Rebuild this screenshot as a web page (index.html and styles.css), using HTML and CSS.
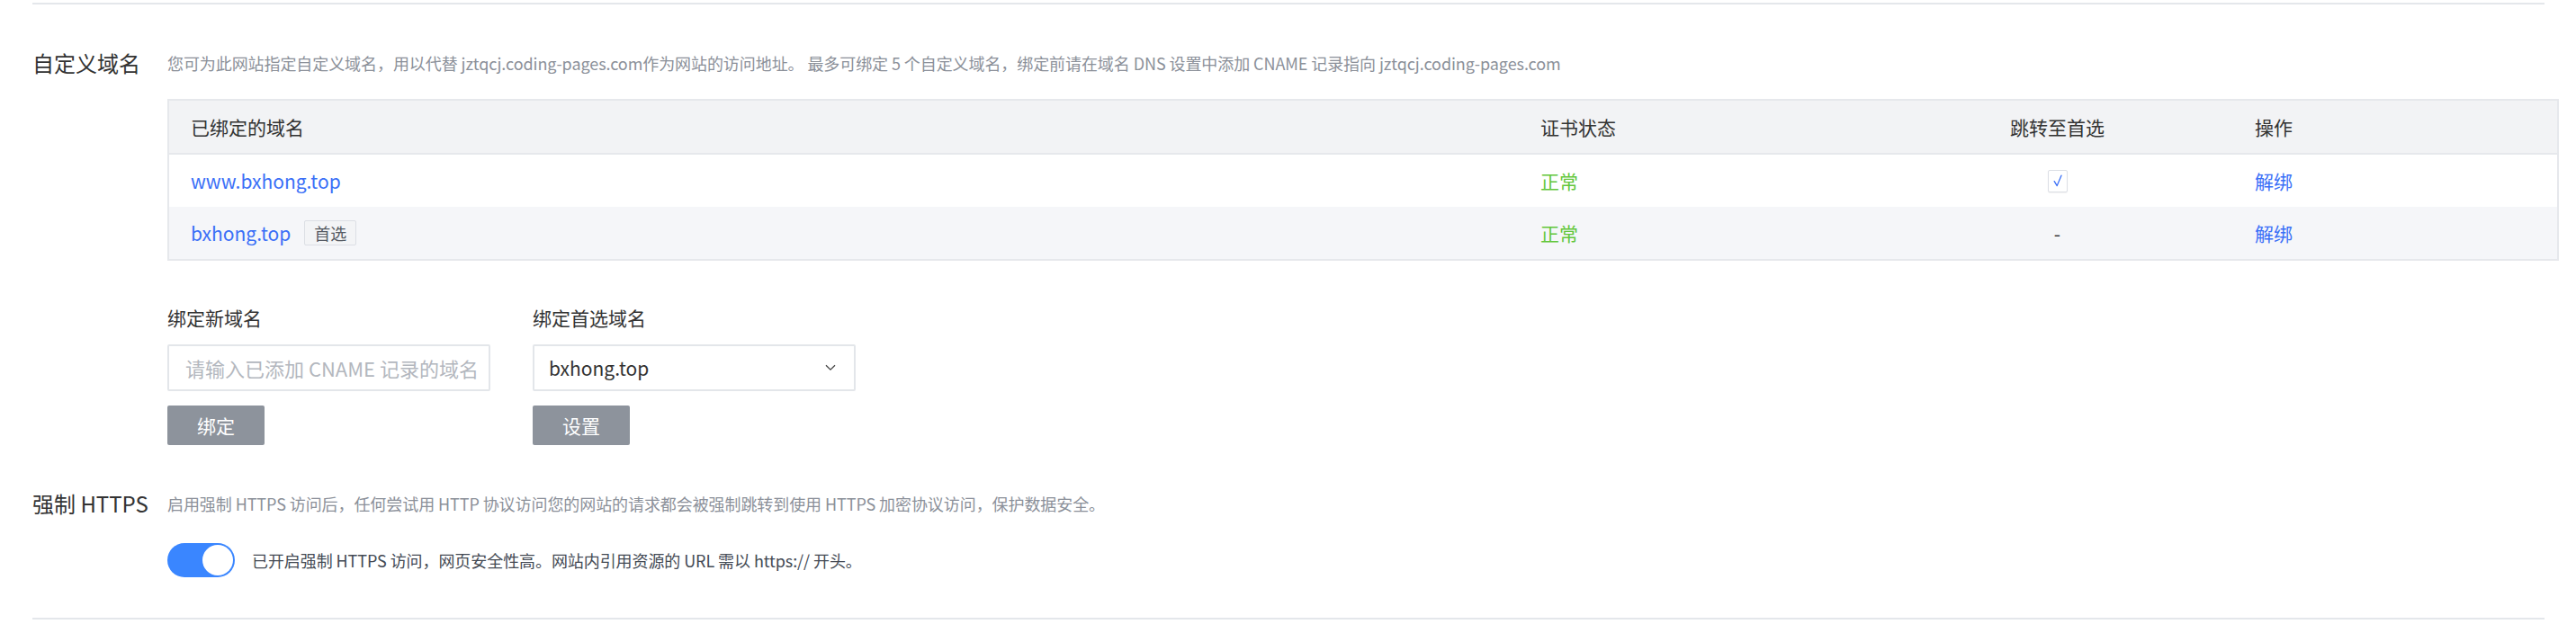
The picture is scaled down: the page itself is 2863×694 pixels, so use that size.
FILE: index.html
```html
<!DOCTYPE html>
<html lang="zh-CN">
<head>
<meta charset="utf-8">
<title>域名设置</title>
<link rel="stylesheet" href="styles.css">
</head>
<body>
<div class="page">
  <div class="rule rule-top"></div>

  <section class="setting setting-domains">
    <div class="setting-head">
      <h2 class="setting-title">自定义域名</h2>
      <p class="setting-desc">您可为此网站指定自定义域名，用以代替 jztqcj.coding-pages.com作为网站的访问地址。 最多可绑定 5 个自定义域名，绑定前请在域名 DNS 设置中添加 CNAME 记录指向 jztqcj.coding-pages.com</p>
    </div>
    <div class="setting-body">
      <div class="domain-table">
        <div class="row row-head">
          <div class="cell col-name">已绑定的域名</div>
          <div class="cell col-cert">证书状态</div>
          <div class="cell col-jump">跳转至首选</div>
          <div class="cell col-op">操作</div>
        </div>
        <div class="row">
          <div class="cell col-name"><a class="link">www.bxhong.top</a></div>
          <div class="cell col-cert"><span class="ok">正常</span></div>
          <div class="cell col-jump">
            <span class="checkbox"><svg viewBox="0 0 14 18" width="14" height="18"><path d="M3.2 9.6 L6.2 14.6 L11 3.2" fill="none" stroke="#3a6ff7" stroke-width="1.3" stroke-linecap="round" stroke-linejoin="round"/></svg></span>
          </div>
          <div class="cell col-op"><a class="link">解绑</a></div>
        </div>
        <div class="row row-alt">
          <div class="cell col-name"><a class="link">bxhong.top</a><span class="tag">首选</span></div>
          <div class="cell col-cert"><span class="ok">正常</span></div>
          <div class="cell col-jump"><span class="dash">-</span></div>
          <div class="cell col-op"><a class="link">解绑</a></div>
        </div>
      </div>

      <div class="form-row">
        <div class="field">
          <label class="field-label">绑定新域名</label>
          <div class="input"><span class="placeholder">请输入已添加 CNAME 记录的域名</span></div>
          <button class="btn">绑定</button>
        </div>
        <div class="field">
          <label class="field-label">绑定首选域名</label>
          <div class="input select">
            <span class="select-value">bxhong.top</span>
            <svg class="chevron" viewBox="0 0 12 8" width="12" height="8"><path d="M1 1.2 L6 6.2 L11 1.2" fill="none" stroke="#444" stroke-width="1.3"/></svg>
          </div>
          <button class="btn">设置</button>
        </div>
      </div>
    </div>
  </section>

  <section class="setting setting-https">
    <div class="setting-head">
      <h2 class="setting-title">强制 HTTPS</h2>
      <p class="setting-desc">启用强制 HTTPS 访问后，任何尝试用 HTTP 协议访问您的网站的请求都会被强制跳转到使用 HTTPS 加密协议访问，保护数据安全。</p>
    </div>
    <div class="setting-body">
      <div class="switch-row">
        <span class="switch"><span class="knob"></span></span>
        <span class="switch-text">已开启强制 HTTPS 访问，网页安全性高。网站内引用资源的 URL 需以 https:// 开头。</span>
      </div>
    </div>
  </section>

  <div class="rule rule-bottom"></div>
</div>
</body>
</html>
```

FILE: styles.css
```css
* { box-sizing: border-box; }

html, body {
  margin: 0;
  padding: 0;
  background: #ffffff;
}

body {
  font-family: "Noto Sans CJK SC", "Noto Sans", "Liberation Sans", sans-serif;
  color: #333333;
  width: 2863px;
  height: 694px;
  overflow: hidden;
}

.page {
  padding: 3px 35px 0 36px;
}

.rule {
  height: 2px;
  background: #e4e7eb;
}

.setting-head {
  display: flex;
  align-items: center;
  height: 32px;
}

.setting-title {
  flex: 0 0 150px;
  margin: 0;
  font-size: 24px;
  line-height: 32px;
  font-weight: 400;
  color: #333333;
  white-space: nowrap;
}

.setting-desc {
  margin: 0;
  font-size: 18px;
  line-height: 32px;
  color: #8b9099;
  white-space: nowrap;
  letter-spacing: -0.08px;
}

.setting-body {
  padding-left: 150px;
}

.setting-domains { padding-top: 49px; }
.setting-https { padding-top: 49px; }

/* table */
.domain-table {
  margin-top: 24px;
  margin-right: -16px;
  border: 2px solid #e6e8ec;
}

.row {
  display: flex;
  height: 58px;
  background: #ffffff;
}

.row-head {
  height: 60px;
  background: #f2f3f5;
  border-bottom: 2px solid #e6e8ec;
}

.row-alt { background: #f5f6f9; }

.cell {
  display: flex;
  align-items: center;
  font-size: 21px;
  color: #333333;
  padding-left: 24px;
}

.row-head .cell + .cell { border-left: 2px solid #ffffff; }
.row .cell + .cell { border-left: 2px solid transparent; }

.col-name { flex: 0 0 1500px; }
.col-cert { flex: 0 0 399px; }
.col-jump { flex: 0 0 397px; justify-content: center; padding-left: 0; }
.col-op { flex: 1 1 auto; }

.row-head .col-cert { padding-left: 22px; }
.row-head .col-op { padding-left: 21px; }
.row .col-cert { padding-left: 22px; }
.row .col-op { padding-left: 20px; }

.link {
  color: #3a6ff7;
  cursor: pointer;
}

.ok { color: #63c73c; }

.dash { color: #333333; }

.checkbox {
  display: inline-flex;
  align-items: center;
  justify-content: center;
  width: 22px;
  height: 25px;
  border: 1px solid #dcdfe5;
  border-radius: 2px;
  background: #ffffff;
  box-shadow: 0 1px 1px rgba(0, 0, 0, 0.05);
}

.tag {
  display: inline-flex;
  align-items: center;
  height: 28px;
  margin-left: 15px;
  padding: 0 10px;
  font-size: 18px;
  color: #555a63;
  background: #f3f4f6;
  border: 1px solid #dcdfe5;
  border-radius: 2px;
}

/* form */
.form-row {
  display: flex;
  gap: 47px;
  margin-top: 48px;
}

.field {
  display: flex;
  flex-direction: column;
  align-items: flex-start;
  width: 359px;
}

.field-label {
  font-size: 21px;
  line-height: 30px;
  color: #333333;
}

.input {
  margin-top: 15px;
  width: 359px;
  height: 52px;
  border: 2px solid #e3e6ea;
  border-radius: 2px;
  background: #ffffff;
  display: flex;
  align-items: center;
  padding: 0 18px;
  overflow: hidden;
  white-space: nowrap;
}

.placeholder {
  font-size: 22px;
  color: #b3b7be;
}

.select {
  justify-content: space-between;
  padding: 0 20px 0 16px;
}

.select-value {
  font-size: 21px;
  color: #333333;
}

.btn {
  margin-top: 16px;
  width: 108px;
  height: 44px;
  border: 0;
  border-radius: 2px;
  background: #8d939c;
  color: #ffffff;
  font-family: inherit;
  font-size: 21px;
  padding: 0;
}

/* switch */
.switch-row {
  display: flex;
  align-items: center;
  gap: 19px;
  margin-top: 28px;
}

.switch {
  position: relative;
  display: inline-block;
  width: 75px;
  height: 38px;
  border-radius: 19px;
  background: #3a86ff;
}

.knob {
  position: absolute;
  top: 2px;
  right: 2px;
  width: 34px;
  height: 34px;
  border-radius: 50%;
  background: #ffffff;
}

.switch-text {
  font-size: 18px;
  color: #444a54;
  letter-spacing: -0.08px;
}

.rule-bottom { margin-top: 45px; }
```
